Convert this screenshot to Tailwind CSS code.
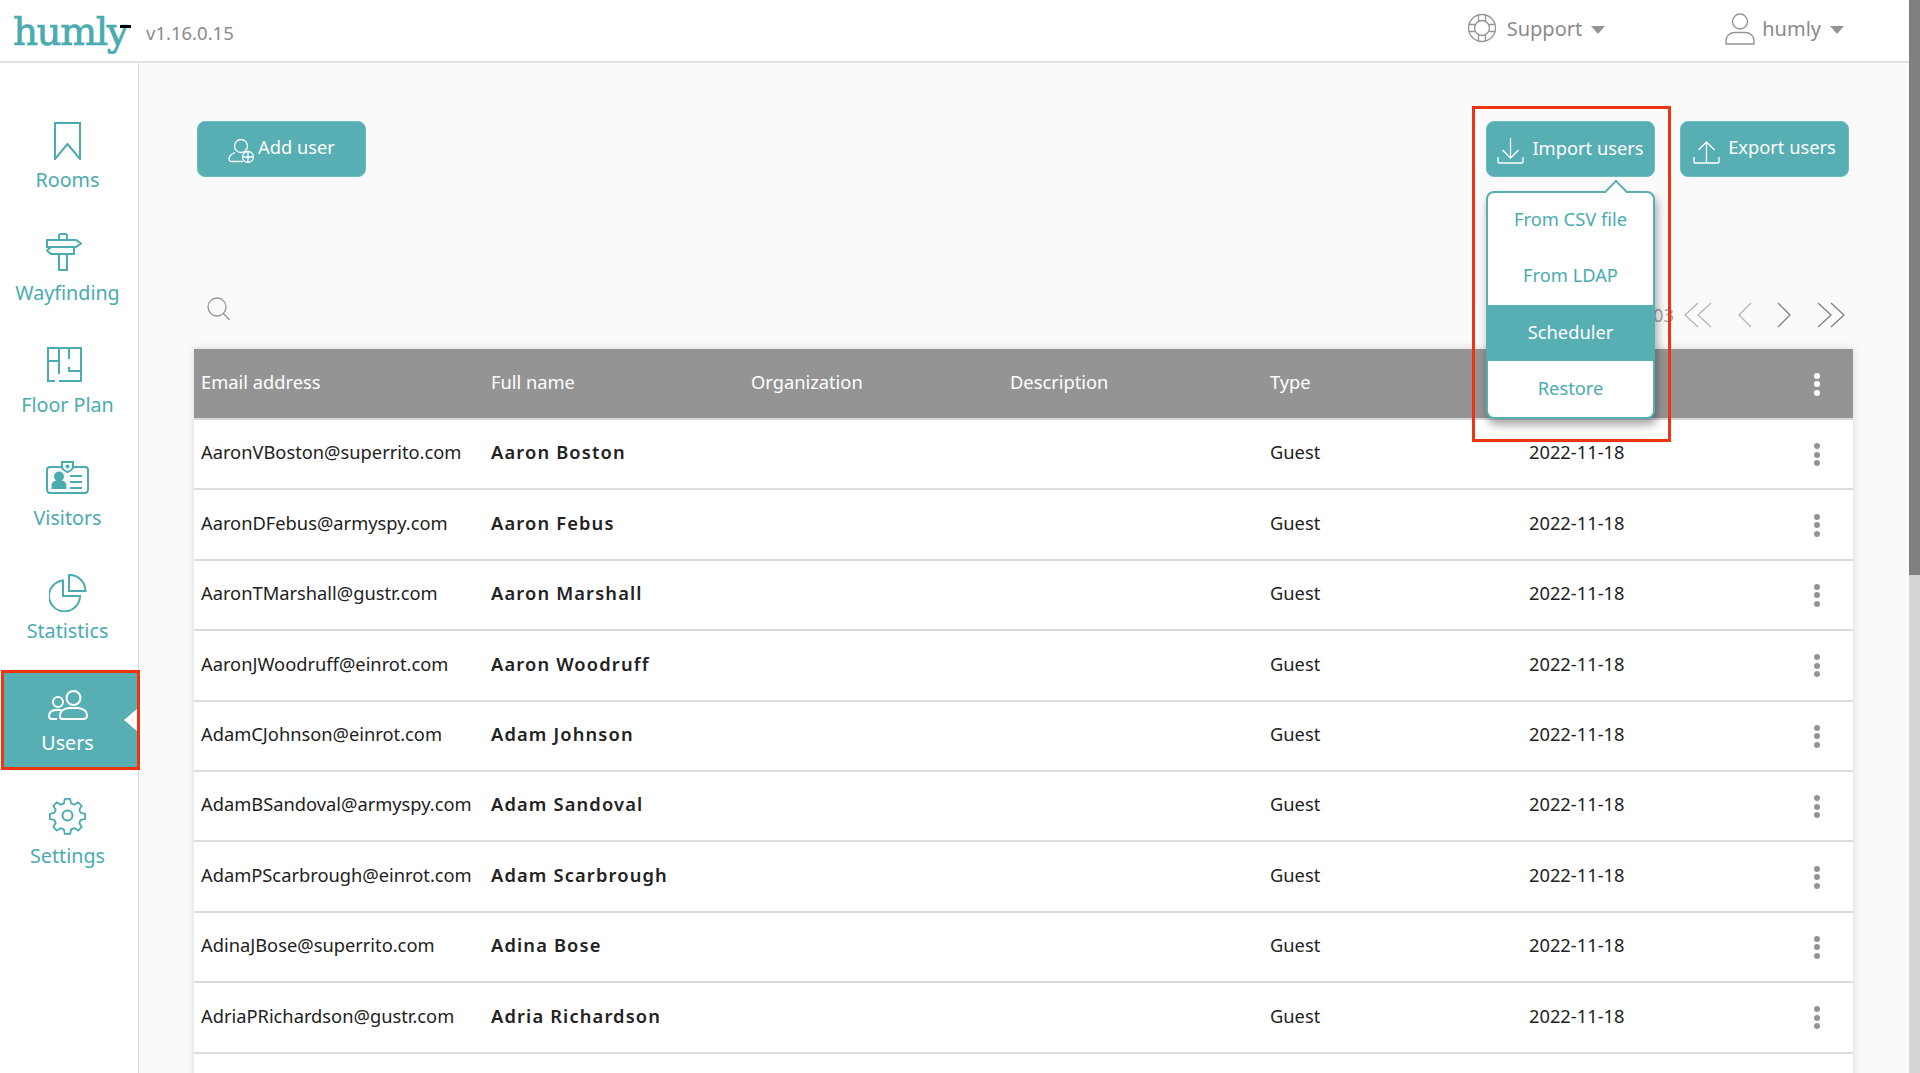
<!DOCTYPE html>
<html lang="en">
<head>
    <meta charset="UTF-8">
    <title>humly</title>
    <script src="https://cdn.jsdelivr.net/npm/@tailwindcss/browser@4"></script>
</head>
<body class="h-screen overflow-hidden flex bg-[#fafafa] font-['Noto_Sans',sans-serif] text-[18.3px] text-[#222]">

    <div class="flex-1 min-w-0 flex flex-col">
        <!-- top bar -->
        <header class="h-[63px] shrink-0 bg-white border-b-2 border-[#e2e2e2] flex items-center">
            <div class="relative ml-[13px] w-[114px] h-[39px] font-['DejaVu_Serif',serif] text-[39px] leading-none tracking-[-1.5px] text-[#4aabb0] [-webkit-text-stroke:0.7px_#4aabb0] mt-[1px]">humly<span class="absolute left-[107px] top-[13px] w-[11px] h-[3px] bg-black"></span></div>
            <span class="ml-[19px] text-[18.500px] text-[#8a8a8a] mt-[4px]">v1.16.0.15</span>
            <div class="ml-auto flex items-center text-[20px] text-[#8a8a8a]">
                <svg class="w-[30px] h-[30px] -mt-[6px]" viewBox="0 0 30 30" fill="none" stroke="#949494" stroke-width="1.3"><circle cx="15" cy="15" r="13.5"/><circle cx="15" cy="15" r="7.5"/><path d="M11.5 2v6.5M18.5 2v6.5M11.5 28v-6.5M18.5 28v-6.5M2 11.5h6.5M2 18.5h6.5M28 11.5h-6.5M28 18.5h-6.5"/></svg>
                <span class="ml-[10px] -mt-[3px]">Support</span>
                <span class="ml-[9px] -mt-[2px] w-0 h-0 border-x-[7px] border-x-transparent border-t-[8px] border-t-[#949494]"></span>
                <svg class="ml-[120px] w-[30px] h-[32px] -mt-[3px]" viewBox="0 0 30 32" fill="none" stroke="#949494" stroke-width="1.4"><circle cx="15" cy="8.5" r="7.5"/><path d="M1 31v-4c0-4 4-7.5 9-7.5h10c5 0 9 3.500 9 7.500v4z"/></svg>
                <span class="ml-[7px] -mt-[3px]">humly</span>
                <span class="ml-[9px] mr-[65px] -mt-[2px] w-0 h-0 border-x-[7px] border-x-transparent border-t-[8px] border-t-[#949494]"></span>
            </div>
        </header>

        <div class="flex-1 min-h-0 flex">
            <!-- side nav -->
            <nav class="w-[139px] shrink-0 bg-white border-r-[1.5px] border-[#d6d6d6] pt-[44px] pl-[2px] flex flex-col gap-[12.6px] text-[19.700px] text-[#4aabb0]">
                <a class="h-[100px] w-[137px] pr-[6px] flex flex-col items-center">
                    <div class="h-[44px] mt-[12px] flex items-center justify-center">
                        <svg class="w-[27px] h-[38px] -ml-[1px]" viewBox="0 0 27 38" fill="none" stroke="#4aabb0" stroke-width="2"><path d="M1 1h25v36L13.500 22 1 37z"/></svg>
                    </div>
                    <span class="mt-[5px] leading-6">Rooms</span>
                </a>
                <a class="h-[100px] w-[137px] pr-[6px] flex flex-col items-center">
                    <div class="h-[44px] mt-[10px] -ml-[7px] flex items-center justify-center">
                        <svg class="w-[36px] h-[38px]" viewBox="0 0 36 38" fill="none" stroke="#4aabb0" stroke-width="2"><path d="M13 7V3q0-2 2-2h4q2 0 2 2v4M1 7h29l5 3.500-5 3.500H1zM5 14h23l0 7H5l-4-3.500zM13 21h8v16h-8z"/></svg>
                    </div>
                    <span class="mt-[7px] leading-6">Wayfinding</span>
                </a>
                <a class="h-[100px] w-[137px] pr-[6px] flex flex-col items-center">
                    <div class="h-[44px] mt-[10px] -ml-[7px] flex items-center justify-center">
                        <svg class="w-[35px] h-[35px]" viewBox="0 0 35 35" fill="none" stroke="#4aabb0" stroke-width="2"><path d="M8 34H1V1h33v33H12M1 14h11M12 1v26M22 1v11M22 20v4h12"/></svg>
                    </div>
                    <span class="mt-[7px] leading-6">Floor Plan</span>
                </a>
                <a class="h-[100px] w-[137px] pr-[6px] flex flex-col items-center">
                    <div class="h-[44px] mt-[11px] flex items-center justify-center">
                        <svg class="w-[43px] h-[34px]" viewBox="0 0 43 34" fill="none" stroke="#4aabb0" stroke-width="2"><path d="M16 6H4q-3 0-3 3v19q0 4 3 4h35q3 0 3-4V9q0-3-3-3H27"/><path d="M16 1h11v6q-2 3-5.500 4-3.500-1-5.500-4z"/><circle cx="21.500" cy="5.500" r="1" fill="#4aabb0"/><circle cx="13" cy="15.500" r="4" fill="#4aabb0"/><path d="M6.500 27v-2q0-4 4-4.500h5q4 .5 4 4.500v2z" fill="#4aabb0"/><path d="M24 15h12M24 21h12M24 27h12"/></svg>
                    </div>
                    <span class="mt-[6px] leading-6">Visitors</span>
                </a>
                <a class="h-[100px] w-[137px] pr-[6px] flex flex-col items-center">
                    <div class="h-[44px] mt-[14px] flex items-center justify-center">
                        <svg class="w-[38px] h-[38px]" viewBox="0 0 38 38" fill="none" stroke="#4aabb0" stroke-width="2"><path d="M14 6.500A15.500 15.500 0 1 0 31 22H14z"/><path d="M20 1a16 16 0 0 1 16.500 16H20z"/></svg>
                    </div>
                    <span class="mt-[4px] leading-6">Statistics</span>
                </a>
                <a class="relative h-[100px] w-[139px] -ml-[1px] pr-[6px] flex flex-col items-center bg-[#57aeb3] text-white border-[3px] border-[#ef3412]">
                    <div class="h-[44px] mt-[10px] flex items-center justify-center">
                        <svg class="w-[40px] h-[30px]" viewBox="0 0 40 30" fill="none" stroke="#fff" stroke-width="2"><circle cx="25.500" cy="8" r="7"/><circle cx="10" cy="12" r="5"/><path d="M14 29h21q4 0 4-3.500 0-6.500-9-7.500h-9q-9 1-9 7.500 0 3.500 2 3.500zM9 29H4q-3 0-3-3 0-5 6-6h6"/></svg>
                    </div>
                    <span class="mt-[4px] leading-6">Users</span>
                    <span class="absolute right-0 top-[36px] w-0 h-0 border-y-[11px] border-y-transparent border-r-[13px] border-r-white"></span>
                </a>
                <a class="h-[100px] w-[137px] pr-[6px] flex flex-col items-center">
                    <div class="h-[44px] mt-[11px] flex items-center justify-center">
                        <svg class="w-[39px] h-[39px]" viewBox="0 0 39 39" fill="none" stroke="#4aabb0" stroke-width="2"><circle cx="19.500" cy="19.500" r="5"/><path d="M16.500 1h6l1 5 3.500 1.500 4.300-2.700 4 4-2.700 4.300 1.500 3.500 5 1v5.800l-5 1-1.500 3.500 2.700 4.300-4 4-4.300-2.700-3.500 1.500-1 5h-6l-1-5-3.500-1.500-4.300 2.700-4-4 2.700-4.300-1.500-3.500-5-1v-5.800l5-1 1.500-3.500-2.700-4.300 4-4 4.300 2.700 3.500-1.500z" stroke-linejoin="round" transform="translate(1.950 1.950) scale(.9)"/></svg>
                    </div>
                    <span class="mt-[6px] leading-6">Settings</span>
                </a>
            </nav>

            <!-- users page -->
            <main class="flex-1 min-w-0 pt-[58px] pl-[55px] pr-[56px]">
                <div class="h-[56px] pl-[3px] pr-[4px] flex text-white">
                    <button class="w-[169px] h-[56px] rounded-lg bg-[#57aeb3] border border-[#6fbcc0] flex items-center justify-center gap-[3px]">
                        <svg class="w-[27px] h-[25px] mt-[2px]" viewBox="0 0 27 25" fill="none" stroke="#fff" stroke-width="1.300"><circle cx="13" cy="8" r="6.500"/><path d="M15 23.500H4q-3 0-3-2.500 0-4 6-6.500M19 14q-1-.5-2-.5"/><circle cx="20" cy="19" r="5.500"/><path d="M20 13.500v11M14.500 19h11"/></svg>
                        <span class="-mt-[4px]">Add user</span>
                    </button>
                    <div class="relative ml-auto -mr-[1px] w-[169px] h-[56px]">
                        <button class="w-full h-full rounded-lg bg-[#57aeb3] border border-[#6fbcc0] flex items-center justify-center gap-[8px]">
                            <svg class="w-[27px] h-[27px] mt-[2px]" viewBox="0 0 27 27" fill="none" stroke="#fff" stroke-width="1.300"><path d="M13.500 1v20M5.500 13l8 8 8-8M1 20v5q0 1 1 1h23q1 0 1-1v-5"/></svg>
                            <span class="-mt-[2px]">Import users</span>
                        </button>
                        <!-- import menu -->
                        <div class="absolute left-0 top-[70px] w-[169px] z-10 rounded-lg border-2 border-[#57aeb3] bg-white text-[#4aabb0] shadow-[2px_6px_10px_rgba(0,0,0,0.35)]">
                            <span class="absolute left-[120px] -top-[10px] w-[16px] h-[16px] rotate-45 bg-white border-t-2 border-l-2 border-[#57aeb3]"></span>
                            <div class="relative h-[56px] flex items-center justify-center"><span class="-mt-[4px]">From CSV file</span></div>
                            <div class="relative h-[56px] flex items-center justify-center"><span class="-mt-[4px]">From LDAP</span></div>
                            <div class="relative h-[56px] flex items-center justify-center bg-[#57aeb3] text-white"><span class="-mt-[2px]">Scheduler</span></div>
                            <div class="relative h-[56px] flex items-center justify-center"><span class="-mt-[2px]">Restore</span></div>
                        </div>
                        <span class="absolute -left-[14px] -top-[15px] w-[199px] h-[336px] z-20 border-[3px] border-[#ef3412]"></span>
                    </div>
                    <button class="ml-[26px] w-[169px] h-[56px] rounded-lg bg-[#57aeb3] border border-[#6fbcc0] flex items-center justify-center gap-[8px]">
                        <svg class="w-[27px] h-[27px] mt-[2px]" viewBox="0 0 27 27" fill="none" stroke="#fff" stroke-width="1.300"><path d="M13.500 26V5M5.500 13l8-8 8 8M1 20v5q0 1 1 1h23q1 0 1-1v-5"/></svg>
                        <span class="-mt-[4px]">Export users</span>
                    </button>
                </div>

                <div class="h-[172px] flex items-end pb-[21px] pl-[13px] pr-[8px]">
                    <svg class="w-[23px] h-[24px] mb-[7px]" viewBox="0 0 23 24" fill="none" stroke="#949494" stroke-width="1.300"><circle cx="10" cy="10" r="9"/><path d="M16.500 16.500l6 6.500"/></svg>
                    <span class="ml-auto text-[#a0a0a0] mr-[10px]">03</span>
                    <svg class="w-[28px] h-[26px]" viewBox="0 0 28 26" fill="none" stroke="#b5b5b5" stroke-width="1.300"><path d="M14 1L1 13l13 12M27 1L14 13l13 12"/></svg>
                    <svg class="ml-[26px] w-[14px] h-[26px]" viewBox="0 0 14 26" fill="none" stroke="#b5b5b5" stroke-width="1.300"><path d="M13 1L1 13l12 12"/></svg>
                    <svg class="ml-[25px] w-[14px] h-[26px]" viewBox="0 0 14 26" fill="none" stroke="#808080" stroke-width="1.300"><path d="M1 1l12 12L1 25"/></svg>
                    <svg class="ml-[26px] w-[28px] h-[26px]" viewBox="0 0 28 26" fill="none" stroke="#808080" stroke-width="1.300"><path d="M1 1l13 12L1 25M14 1l13 12-13 12"/></svg>
                </div>

                <!-- table -->
                <div class="bg-white shadow-[0_0_8px_rgba(0,0,0,0.14)]">
                    <div class="h-[71px] bg-[#949494] text-white border-b-2 border-[#d8d8d8] grid grid-cols-[290px_260px_259px_260px_259px_1fr_39px] items-center pl-[7px]">
                        <span class="-mt-[4px]">Email address</span><span class="-mt-[4px]">Full name</span><span class="-mt-[4px]">Organization</span><span class="-mt-[4px]">Description</span><span class="-mt-[4px]">Type</span><span></span>
                        <span class="flex flex-col gap-[2.500px] w-[6px] mt-[1px]"><i class="size-[6px] rounded-full bg-white"></i><i class="size-[6px] rounded-full bg-white"></i><i class="size-[6px] rounded-full bg-white"></i></span>
                    </div>
                    <div class="h-[70.400px] border-b-2 border-[#dcdcdc] grid grid-cols-[290px_260px_259px_260px_259px_1fr_39px] items-center pl-[7px]">
                        <span class="-mt-[4px]">AaronVBoston@superrito.com</span><span class="-mt-[4px] font-semibold tracking-[1.15px]">Aaron Boston</span><span></span><span></span><span class="-mt-[4px]">Guest</span><span class="-mt-[4px]">2022-11-18</span>
                        <span class="flex flex-col gap-[2.500px] w-[6px] mt-[1px]"><i class="size-[6px] rounded-full bg-[#949494]"></i><i class="size-[6px] rounded-full bg-[#949494]"></i><i class="size-[6px] rounded-full bg-[#949494]"></i></span>
                    </div>
                    <div class="h-[70.400px] border-b-2 border-[#dcdcdc] grid grid-cols-[290px_260px_259px_260px_259px_1fr_39px] items-center pl-[7px]">
                        <span class="-mt-[4px]">AaronDFebus@armyspy.com</span><span class="-mt-[4px] font-semibold tracking-[1.15px]">Aaron Febus</span><span></span><span></span><span class="-mt-[4px]">Guest</span><span class="-mt-[4px]">2022-11-18</span>
                        <span class="flex flex-col gap-[2.500px] w-[6px] mt-[1px]"><i class="size-[6px] rounded-full bg-[#949494]"></i><i class="size-[6px] rounded-full bg-[#949494]"></i><i class="size-[6px] rounded-full bg-[#949494]"></i></span>
                    </div>
                    <div class="h-[70.400px] border-b-2 border-[#dcdcdc] grid grid-cols-[290px_260px_259px_260px_259px_1fr_39px] items-center pl-[7px]">
                        <span class="-mt-[4px]">AaronTMarshall@gustr.com</span><span class="-mt-[4px] font-semibold tracking-[1.15px]">Aaron Marshall</span><span></span><span></span><span class="-mt-[4px]">Guest</span><span class="-mt-[4px]">2022-11-18</span>
                        <span class="flex flex-col gap-[2.500px] w-[6px] mt-[1px]"><i class="size-[6px] rounded-full bg-[#949494]"></i><i class="size-[6px] rounded-full bg-[#949494]"></i><i class="size-[6px] rounded-full bg-[#949494]"></i></span>
                    </div>
                    <div class="h-[70.400px] border-b-2 border-[#dcdcdc] grid grid-cols-[290px_260px_259px_260px_259px_1fr_39px] items-center pl-[7px]">
                        <span class="-mt-[4px]">AaronJWoodruff@einrot.com</span><span class="-mt-[4px] font-semibold tracking-[1.15px]">Aaron Woodruff</span><span></span><span></span><span class="-mt-[4px]">Guest</span><span class="-mt-[4px]">2022-11-18</span>
                        <span class="flex flex-col gap-[2.500px] w-[6px] mt-[1px]"><i class="size-[6px] rounded-full bg-[#949494]"></i><i class="size-[6px] rounded-full bg-[#949494]"></i><i class="size-[6px] rounded-full bg-[#949494]"></i></span>
                    </div>
                    <div class="h-[70.400px] border-b-2 border-[#dcdcdc] grid grid-cols-[290px_260px_259px_260px_259px_1fr_39px] items-center pl-[7px]">
                        <span class="-mt-[4px]">AdamCJohnson@einrot.com</span><span class="-mt-[4px] font-semibold tracking-[1.15px]">Adam Johnson</span><span></span><span></span><span class="-mt-[4px]">Guest</span><span class="-mt-[4px]">2022-11-18</span>
                        <span class="flex flex-col gap-[2.500px] w-[6px] mt-[1px]"><i class="size-[6px] rounded-full bg-[#949494]"></i><i class="size-[6px] rounded-full bg-[#949494]"></i><i class="size-[6px] rounded-full bg-[#949494]"></i></span>
                    </div>
                    <div class="h-[70.400px] border-b-2 border-[#dcdcdc] grid grid-cols-[290px_260px_259px_260px_259px_1fr_39px] items-center pl-[7px]">
                        <span class="-mt-[4px]">AdamBSandoval@armyspy.com</span><span class="-mt-[4px] font-semibold tracking-[1.15px]">Adam Sandoval</span><span></span><span></span><span class="-mt-[4px]">Guest</span><span class="-mt-[4px]">2022-11-18</span>
                        <span class="flex flex-col gap-[2.500px] w-[6px] mt-[1px]"><i class="size-[6px] rounded-full bg-[#949494]"></i><i class="size-[6px] rounded-full bg-[#949494]"></i><i class="size-[6px] rounded-full bg-[#949494]"></i></span>
                    </div>
                    <div class="h-[70.400px] border-b-2 border-[#dcdcdc] grid grid-cols-[290px_260px_259px_260px_259px_1fr_39px] items-center pl-[7px]">
                        <span class="-mt-[4px]">AdamPScarbrough@einrot.com</span><span class="-mt-[4px] font-semibold tracking-[1.15px]">Adam Scarbrough</span><span></span><span></span><span class="-mt-[4px]">Guest</span><span class="-mt-[4px]">2022-11-18</span>
                        <span class="flex flex-col gap-[2.500px] w-[6px] mt-[1px]"><i class="size-[6px] rounded-full bg-[#949494]"></i><i class="size-[6px] rounded-full bg-[#949494]"></i><i class="size-[6px] rounded-full bg-[#949494]"></i></span>
                    </div>
                    <div class="h-[70.400px] border-b-2 border-[#dcdcdc] grid grid-cols-[290px_260px_259px_260px_259px_1fr_39px] items-center pl-[7px]">
                        <span class="-mt-[4px]">AdinaJBose@superrito.com</span><span class="-mt-[4px] font-semibold tracking-[1.15px]">Adina Bose</span><span></span><span></span><span class="-mt-[4px]">Guest</span><span class="-mt-[4px]">2022-11-18</span>
                        <span class="flex flex-col gap-[2.500px] w-[6px] mt-[1px]"><i class="size-[6px] rounded-full bg-[#949494]"></i><i class="size-[6px] rounded-full bg-[#949494]"></i><i class="size-[6px] rounded-full bg-[#949494]"></i></span>
                    </div>
                    <div class="h-[70.400px] border-b-2 border-[#dcdcdc] grid grid-cols-[290px_260px_259px_260px_259px_1fr_39px] items-center pl-[7px]">
                        <span class="-mt-[4px]">AdriaPRichardson@gustr.com</span><span class="-mt-[4px] font-semibold tracking-[1.15px]">Adria Richardson</span><span></span><span></span><span class="-mt-[4px]">Guest</span><span class="-mt-[4px]">2022-11-18</span>
                        <span class="flex flex-col gap-[2.500px] w-[6px] mt-[1px]"><i class="size-[6px] rounded-full bg-[#949494]"></i><i class="size-[6px] rounded-full bg-[#949494]"></i><i class="size-[6px] rounded-full bg-[#949494]"></i></span>
                    </div>
                    <div class="h-[70.400px]"></div>
                </div>
            </main>
        </div>
    </div>

    <!-- scrollbar -->
    <div class="w-[11px] shrink-0 bg-[#d4d4d4]">
        <div class="h-[575px] bg-[#808080]"></div>
    </div>
</body>
</html>
